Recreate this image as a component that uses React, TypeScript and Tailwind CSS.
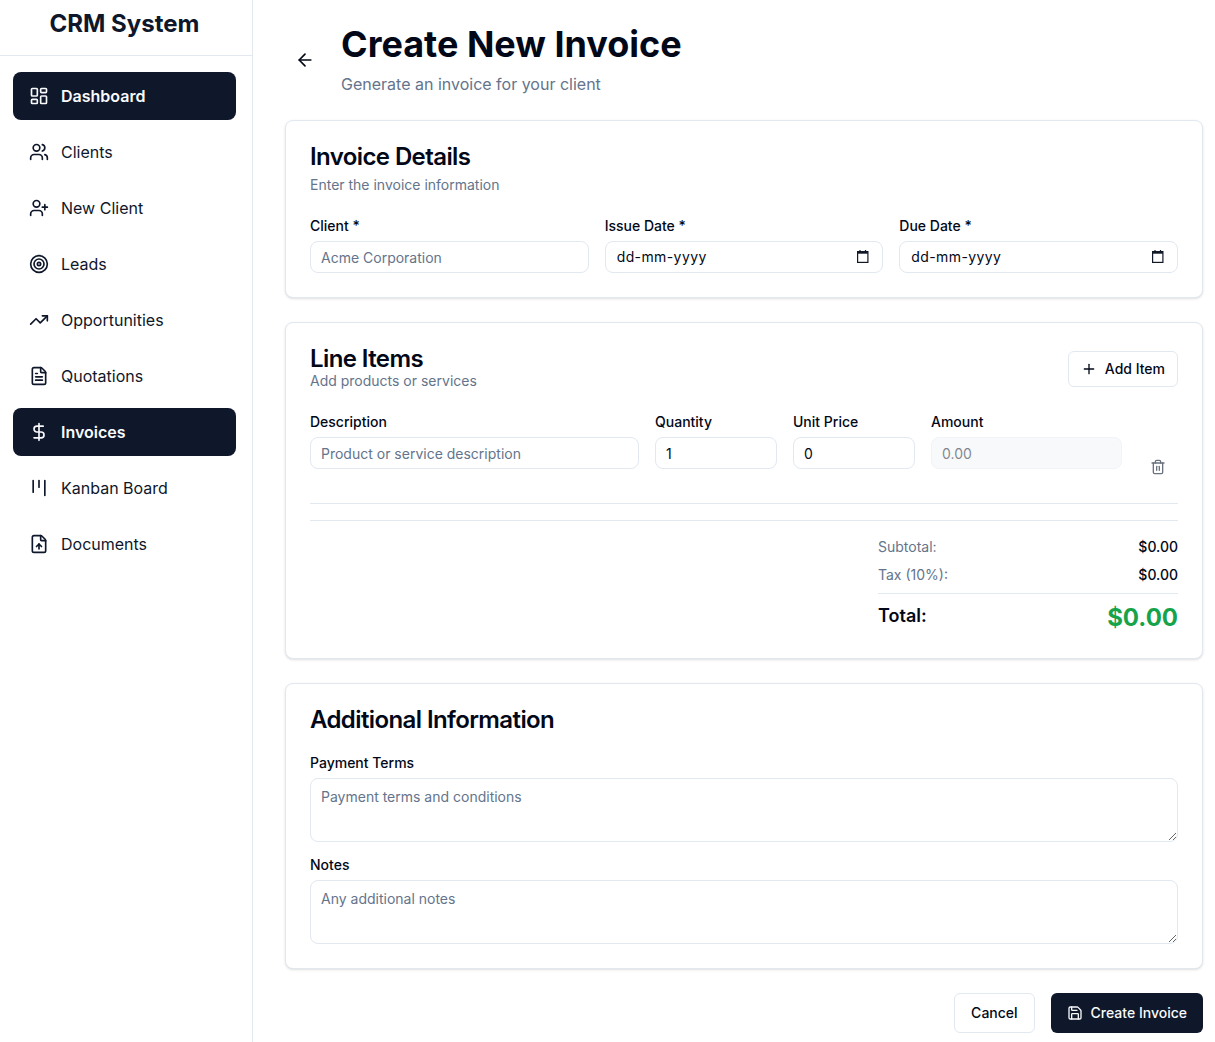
import React from "react";
import {
  ArrowLeft,
  DollarSign,
  FileText,
  FileUp,
  Kanban,
  LayoutDashboard,
  Plus,
  Save,
  Target,
  Trash2,
  TrendingUp,
  UserPlus,
  Users,
} from "lucide-react";

const navItems = [
  { label: "Dashboard", icon: LayoutDashboard, active: true },
  { label: "Clients", icon: Users },
  { label: "New Client", icon: UserPlus },
  { label: "Leads", icon: Target },
  { label: "Opportunities", icon: TrendingUp },
  { label: "Quotations", icon: FileText },
  { label: "Invoices", icon: DollarSign, active: true },
  { label: "Kanban Board", icon: Kanban },
  { label: "Documents", icon: FileUp },
];

const inputClass =
  "block w-full h-8 rounded-lg border border-[#e2e8f0] bg-white px-[10px] text-sm text-[#020817] placeholder:text-[#64748b] outline-none";

const Label = ({ children }: { children: React.ReactNode }) => (
  <label className="mb-2 block text-sm leading-none font-medium text-[#020817]">{children}</label>
);

const Card = ({ children }: { children: React.ReactNode }) => (
  <section className="rounded-lg border border-[#e2e8f0] bg-white p-6 shadow-sm">{children}</section>
);

const CardTitle = ({ children }: { children: React.ReactNode }) => (
  <h2 className="text-2xl leading-none font-semibold tracking-tight text-[#020817]">{children}</h2>
);

// the browser draws dd-mm-yyyy only under some locales, so the field is drawn by hand
const DateField = () => (
  <div className="flex h-8 w-full items-center justify-between rounded-lg border border-[#e2e8f0] bg-white pr-[11px] pl-[11px] text-sm tracking-[0.4px] text-[#020817]">
    <span>dd-mm-yyyy</span>
    <svg width="16" height="16" viewBox="0 0 16 16" fill="none" stroke="#111827" strokeWidth="1.2">
      <rect x="2.6" y="2.6" width="10.3" height="10.8" />
      <path d="M2.6 3.6h10.3" strokeWidth="2.2" />
      <path d="M5 1v2M10.5 1v2" />
    </svg>
  </div>
);

const App = () => {
  return (
    <div className="flex h-screen overflow-hidden bg-white font-['Inter',sans-serif] text-[#020817]">
      <aside className="h-full w-[253px] shrink-0 border-r border-[#e2e8f0]">
        <div className="h-14 border-b border-[#e2e8f0] pt-2 pr-[3px] text-center text-2xl font-bold text-[#0f172a]">
          CRM System
        </div>
        <nav className="flex flex-col gap-2 px-[13px] pt-4 pr-4">
          {navItems.map((item) => {
            const Icon = item.icon;
            return (
              <a
                key={item.label}
                className={
                  item.active
                    ? "flex h-12 items-center gap-3 rounded-lg bg-[#0f172a] px-4 font-semibold text-[#f8fafc]"
                    : "flex h-12 items-center gap-3 rounded-lg px-4 text-[#0f172a]"
                }
              >
                <Icon size={20} />
                {item.label}
              </a>
            );
          })}
        </nav>
      </aside>

      <main className="min-w-0 flex-1 pt-6 pr-3 pl-8">
        <div className="mb-6 flex items-center gap-4">
          <button className="flex h-10 w-10 items-center justify-center text-[#020817]">
            <ArrowLeft size={20} />
          </button>
          <div>
            <h1 className="text-4xl font-bold text-[#020817]">Create New Invoice</h1>
            <p className="mt-2 text-[#64748b]">Generate an invoice for your client</p>
          </div>
        </div>

        <div className="flex flex-col gap-6">
          <Card>
            <CardTitle>Invoice Details</CardTitle>
            <p className="mt-1.5 text-sm text-[#64748b]">Enter the invoice information</p>
            <div className="mt-6 grid grid-cols-3 gap-4">
              <div>
                <Label>Client *</Label>
                <input className={inputClass} placeholder="Acme Corporation" />
              </div>
              <div>
                <Label>Issue Date *</Label>
                <DateField />
              </div>
              <div>
                <Label>Due Date *</Label>
                <DateField />
              </div>
            </div>
          </Card>

          <Card>
            <div className="flex items-center justify-between">
              <div>
                <CardTitle>Line Items</CardTitle>
                <p className="text-sm text-[#64748b]">Add products or services</p>
              </div>
              <button className="flex h-9 items-center gap-2 rounded-md border border-[#e2e8f0] bg-white px-3 text-sm font-medium text-[#020817]">
                <Plus size={16} />
                Add Item
              </button>
            </div>

            <div className="mt-6 grid grid-cols-[329fr_122fr_122fr_191fr_40px] gap-4 border-b border-[#e2e8f0] pb-4">
              <div>
                <Label>Description</Label>
                <input className={inputClass} placeholder="Product or service description" />
              </div>
              <div>
                <Label>Quantity</Label>
                <input className={inputClass} defaultValue="1" />
              </div>
              <div>
                <Label>Unit Price</Label>
                <input className={inputClass} defaultValue="0" />
              </div>
              <div>
                <Label>Amount</Label>
                <input
                  disabled
                  className="block h-8 w-full rounded-lg border border-[#e2e8f0] bg-[#f1f5f9] px-[10px] text-sm text-[#020817] opacity-50"
                  defaultValue="0.00"
                />
              </div>
              <button className="mt-8 flex h-10 w-10 items-center justify-center text-[#6b7280]">
                <Trash2 size={16} />
              </button>
            </div>

            <div className="mt-4 flex justify-end border-t border-[#e2e8f0] pt-4">
              <div className="w-[300px] text-sm">
                <div className="flex justify-between">
                  <span className="text-[#64748b]">Subtotal:</span>
                  <span className="font-medium">$0.00</span>
                </div>
                <div className="mt-2 flex justify-between">
                  <span className="text-[#64748b]">Tax (10%):</span>
                  <span className="font-medium">$0.00</span>
                </div>
                <div className="mt-2 flex justify-between border-t border-[#e2e8f0] pt-2">
                  <span className="text-lg font-semibold">Total:</span>
                  <span className="text-2xl font-bold text-[#16a34a]">$0.00</span>
                </div>
              </div>
            </div>
          </Card>

          <Card>
            <CardTitle>Additional Information</CardTitle>
            <div className="mt-6">
              <Label>Payment Terms</Label>
              <textarea
                className="block h-16 w-full rounded-lg border border-[#e2e8f0] bg-white px-[10px] py-2 text-sm placeholder:text-[#64748b] outline-none"
                placeholder="Payment terms and conditions"
              />
            </div>
            <div className="mt-4">
              <Label>Notes</Label>
              <textarea
                className="block h-16 w-full rounded-lg border border-[#e2e8f0] bg-white px-[10px] py-2 text-sm placeholder:text-[#64748b] outline-none"
                placeholder="Any additional notes"
              />
            </div>
          </Card>

          <div className="flex justify-end gap-4">
            <button className="h-10 rounded-md border border-[#e2e8f0] bg-white px-4 text-sm font-medium">
              Cancel
            </button>
            <button className="flex h-10 items-center gap-2 rounded-md bg-[#0f172a] px-4 text-sm font-medium text-[#f8fafc]">
              <Save size={16} />
              Create Invoice
            </button>
          </div>
        </div>
      </main>
    </div>
  );
};

export default App;
